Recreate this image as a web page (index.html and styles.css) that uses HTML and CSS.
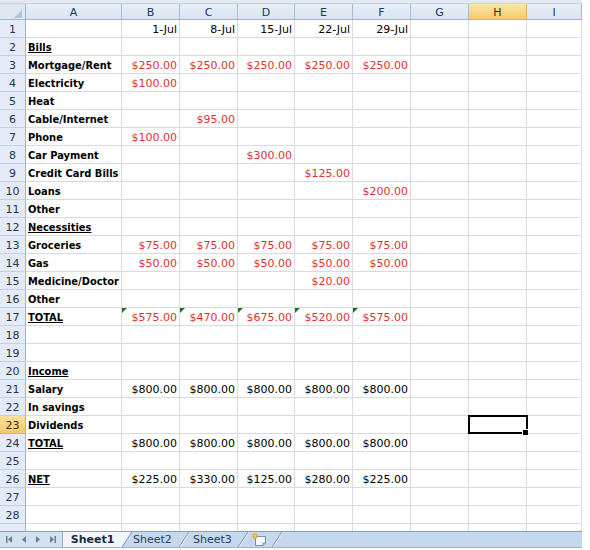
FILE: index.html
```html
<!DOCTYPE html>
<html>
<head>
<meta charset="utf-8">
<link rel="stylesheet" href="styles.css">
</head>
<body>
<div class="app">
  <div class="band"></div>
  <div class="viewport">
    <div class="grid">
      <span class="corner"><svg class="corner-tri" width="8" height="8" viewBox="0 0 8 8"><polygon points="8,0 8,8 0,8" fill="#b5c2d2"/></svg></span><span class="ch">A</span><span class="ch">B</span><span class="ch">C</span><span class="ch">D</span><span class="ch">E</span><span class="ch">F</span><span class="ch">G</span><span class="ch chs">H</span><span class="ch">I</span>

      <span class="rh">1</span><span class="a"></span><span class="n">1-Jul</span><span class="n">8-Jul</span><span class="n">15-Jul</span><span class="n">22-Jul</span><span class="n">29-Jul</span><span></span><span></span><span></span>
      <span class="rh">2</span><span class="a u">Bills</span><span></span><span></span><span></span><span></span><span></span><span></span><span></span><span></span>
      <span class="rh">3</span><span class="a">Mortgage/Rent</span><span class="n r">$250.00</span><span class="n r">$250.00</span><span class="n r">$250.00</span><span class="n r">$250.00</span><span class="n r">$250.00</span><span></span><span></span><span></span>
      <span class="rh">4</span><span class="a">Electricity</span><span class="n r">$100.00</span><span></span><span></span><span></span><span></span><span></span><span></span><span></span>
      <span class="rh">5</span><span class="a">Heat</span><span></span><span></span><span></span><span></span><span></span><span></span><span></span><span></span>
      <span class="rh">6</span><span class="a">Cable/Internet</span><span></span><span class="n r">$95.00</span><span></span><span></span><span></span><span></span><span></span><span></span>
      <span class="rh">7</span><span class="a">Phone</span><span class="n r">$100.00</span><span></span><span></span><span></span><span></span><span></span><span></span><span></span>
      <span class="rh">8</span><span class="a">Car Payment</span><span></span><span></span><span class="n r">$300.00</span><span></span><span></span><span></span><span></span><span></span>
      <span class="rh">9</span><span class="a">Credit Card Bills</span><span></span><span></span><span></span><span class="n r">$125.00</span><span></span><span></span><span></span><span></span>
      <span class="rh">10</span><span class="a">Loans</span><span></span><span></span><span></span><span></span><span class="n r">$200.00</span><span></span><span></span><span></span>
      <span class="rh">11</span><span class="a">Other</span><span></span><span></span><span></span><span></span><span></span><span></span><span></span><span></span>
      <span class="rh">12</span><span class="a u">Necessities</span><span></span><span></span><span></span><span></span><span></span><span></span><span></span><span></span>
      <span class="rh">13</span><span class="a">Groceries</span><span class="n r">$75.00</span><span class="n r">$75.00</span><span class="n r">$75.00</span><span class="n r">$75.00</span><span class="n r">$75.00</span><span></span><span></span><span></span>
      <span class="rh">14</span><span class="a">Gas</span><span class="n r">$50.00</span><span class="n r">$50.00</span><span class="n r">$50.00</span><span class="n r">$50.00</span><span class="n r">$50.00</span><span></span><span></span><span></span>
      <span class="rh">15</span><span class="a">Medicine/Doctor</span><span></span><span></span><span></span><span class="n r">$20.00</span><span></span><span></span><span></span><span></span>
      <span class="rh">16</span><span class="a">Other</span><span></span><span></span><span></span><span></span><span></span><span></span><span></span><span></span>
      <span class="rh">17</span><span class="a u">TOTAL</span><span class="n r t">$575.00</span><span class="n r t">$470.00</span><span class="n r t">$675.00</span><span class="n r t">$520.00</span><span class="n r t">$575.00</span><span></span><span></span><span></span>
      <span class="rh">18</span><span class="a"></span><span></span><span></span><span></span><span></span><span></span><span></span><span></span><span></span>
      <span class="rh">19</span><span class="a"></span><span></span><span></span><span></span><span></span><span></span><span></span><span></span><span></span>
      <span class="rh">20</span><span class="a u">Income</span><span></span><span></span><span></span><span></span><span></span><span></span><span></span><span></span>
      <span class="rh">21</span><span class="a">Salary</span><span class="n">$800.00</span><span class="n">$800.00</span><span class="n">$800.00</span><span class="n">$800.00</span><span class="n">$800.00</span><span></span><span></span><span></span>
      <span class="rh">22</span><span class="a">In savings</span><span></span><span></span><span></span><span></span><span></span><span></span><span></span><span></span>
      <span class="rh rhs">23</span><span class="a">Dividends</span><span></span><span></span><span></span><span></span><span></span><span></span><span class="active"></span><span></span>
      <span class="rh">24</span><span class="a u">TOTAL</span><span class="n">$800.00</span><span class="n">$800.00</span><span class="n">$800.00</span><span class="n">$800.00</span><span class="n">$800.00</span><span></span><span></span><span></span>
      <span class="rh">25</span><span class="a"></span><span></span><span></span><span></span><span></span><span></span><span></span><span></span><span></span>
      <span class="rh">26</span><span class="a u">NET</span><span class="n">$225.00</span><span class="n">$330.00</span><span class="n">$125.00</span><span class="n">$280.00</span><span class="n">$225.00</span><span></span><span></span><span></span>
      <span class="rh">27</span><span class="a"></span><span></span><span></span><span></span><span></span><span></span><span></span><span></span><span></span>
      <span class="rh">28</span><span class="a"></span><span></span><span></span><span></span><span></span><span></span><span></span><span></span><span></span>
      <span class="rh"></span><span class="a"></span><span></span><span></span><span></span><span></span><span></span><span></span><span></span><span></span>
    </div>
  </div>
  <div class="tabbar">
    <div class="nav">
      <svg width="62" height="15" viewBox="0 0 62 15">
        <g fill="#6b7f98">
          <rect x="6" y="4" width="1.5" height="7"/>
          <polygon points="8,7.5 12,4 12,11"/>
          <polygon points="22,7.5 26,4 26,11"/>
          <polygon points="40,7.5 36,4 36,11"/>
          <polygon points="54,7.5 50,4 50,11"/>
          <rect x="54.5" y="4" width="1.5" height="7"/>
        </g>
      </svg>
    </div>
    <div class="tab tab-active">Sheet1</div>
    <svg class="sep" width="10" height="15" viewBox="0 0 10 15">
      <polygon points="0,0 10,0 0,15" fill="#f2f5f9"/>
      <line x1="0" y1="15" x2="10" y2="0" stroke="#7f93ab" stroke-width="1"/>
    </svg>
    <div class="tab tab-2">Sheet2</div>
    <svg class="sep" width="11" height="15" viewBox="0 0 11 15">
      <line x1="0" y1="15" x2="10" y2="0" stroke="#7f93ab" stroke-width="1"/>
      <line x1="1.2" y1="15" x2="11.2" y2="0" stroke="#e8eff8" stroke-width="1"/>
    </svg>
    <div class="tab tab-3">Sheet3</div>
    <svg class="sep" width="12" height="15" viewBox="0 0 12 15">
      <line x1="1" y1="15" x2="11" y2="0" stroke="#7f93ab" stroke-width="1"/>
      <line x1="2.2" y1="15" x2="12.2" y2="0" stroke="#e8eff8" stroke-width="1"/>
    </svg>
    <svg class="ins" width="23" height="15" viewBox="0 0 23 15">
      <path d="M6.5 4.5 H16.5 V11 L14 13.5 H6.5 Z" fill="#f7f9fc" stroke="#7d8ea4" stroke-width="1"/>
      <path d="M14 13.5 V11 H16.5" fill="none" stroke="#7d8ea4" stroke-width="1"/>
      <g stroke="#e8a317" stroke-width="1.2">
        <line x1="6" y1="1" x2="6" y2="7"/>
        <line x1="3" y1="4" x2="9" y2="4"/>
        <line x1="4" y1="2" x2="8" y2="6"/>
        <line x1="8" y1="2" x2="4" y2="6"/>
      </g>
      <circle cx="6" cy="4" r="1.3" fill="#ffd84a"/>
    </svg>
    <svg class="sep" width="11" height="15" viewBox="0 0 11 15">
      <line x1="0" y1="15" x2="10" y2="0" stroke="#7f93ab" stroke-width="1"/>
      <line x1="1.2" y1="15" x2="11.2" y2="0" stroke="#e8eff8" stroke-width="1"/>
    </svg>
  </div>
</div>
</body>
</html>
```
FILE: styles.css
```css
html, body {
  margin: 0;
  padding: 0;
  background: #ffffff;
}

body {
  font-family: "DejaVu Sans", "Liberation Sans", sans-serif;
  font-size: 11px;
  color: #000;
}

.app {
  width: 582px;
}

.band {
  height: 4px;
  box-sizing: border-box;
  background: #e4e9ef;
  border-bottom: 1px solid #c9d3df;
}

.viewport {
  height: 527px;
  overflow: hidden;
}

.grid {
  display: grid;
  grid-template-columns: 26px 96px 58px 58px 57px 58px 58px 58px 58px 55px;
  grid-template-rows: 16px;
  grid-auto-rows: 18px;
}

.grid > span {
  position: relative;
  box-sizing: border-box;
  border-right: 1px solid #d8dbe0;
  border-bottom: 1px solid #d8dbe0;
  padding: 2px 2px 0 2px;
  line-height: 16px;
  white-space: nowrap;
}

.grid > .corner {
  background: #dfe7f2;
  border-right: 1px solid #9eb6ce;
  border-bottom: 1px solid #9eb6ce;
  padding: 0;
}

.corner-tri {
  display: block;
  margin: 6px 0 0 14px;
}

.grid > .ch {
  background: linear-gradient(#e6edf7, #dae4f1);
  border-right: 1px solid #a7bcd3;
  border-bottom: 1px solid #9eb6ce;
  text-align: center;
  color: #26364c;
  padding: 2px 0 0 0;
  line-height: 14px;
}

.grid > .chs {
  background: linear-gradient(#fce7a9, #f6ca6a);
  border-right: 1px solid #e0b25a;
  border-bottom: 1px solid #e0b25a;
  color: #3a3020;
}

.grid > .rh {
  background: #e4ebf6;
  border-right: 1px solid #9eb6ce;
  border-bottom: 1px solid #c3d1e3;
  text-align: center;
  color: #26364c;
  padding: 2px 0 0 0;
}

.grid > .rhs {
  background: linear-gradient(#fbe0a0, #f6ca6a);
  border-bottom: 1px solid #e0b25a;
  color: #3a3020;
}

.grid > .a {
  font-family: "DejaVu Sans Condensed", "DejaVu Sans", sans-serif;
  font-stretch: condensed;
  font-weight: bold;
}

.grid > .u {
  text-decoration: underline;
}

.grid > .n {
  text-align: right;
}

.grid > .r {
  color: #dd3131;
}

.grid > .t::before {
  content: "";
  position: absolute;
  left: 0;
  top: 0;
  border-top: 5px solid #17761c;
  border-right: 5px solid transparent;
}

.grid > .active::after {
  content: "";
  position: absolute;
  left: -1px;
  top: -1px;
  width: 60px;
  height: 19px;
  box-sizing: border-box;
  border: 2px solid #000;
}

.grid > .active::before {
  content: "";
  position: absolute;
  right: -3px;
  bottom: -3px;
  width: 5px;
  height: 5px;
  background: #000;
  border: 1px solid #fff;
  z-index: 2;
}

.tabbar {
  display: flex;
  align-items: stretch;
  height: 17px;
  box-sizing: border-box;
  width: 582px;
  background: #c6d8ed;
  border-top: 1px solid #8a9eb7;
  border-bottom: 1px solid #9fb2c9;
}

.nav {
  width: 63px;
  box-sizing: border-box;
  background: #d3e0f0;
  border-right: 1px solid #95a9c2;
}

.nav svg {
  display: block;
}

.tab {
  line-height: 15px;
  white-space: nowrap;
  color: #2c4160;
}

.tab-active {
  width: 59px;
  background: #f2f5f9;
  font-weight: bold;
  text-align: center;
  color: #1b2a3f;
}

.tab-2 {
  width: 47px;
  padding-left: 1px;
  box-sizing: border-box;
}

.tab-3 {
  width: 47px;
  padding-left: 3px;
  box-sizing: border-box;
}

.sep, .ins {
  display: block;
  flex: none;
}
```
